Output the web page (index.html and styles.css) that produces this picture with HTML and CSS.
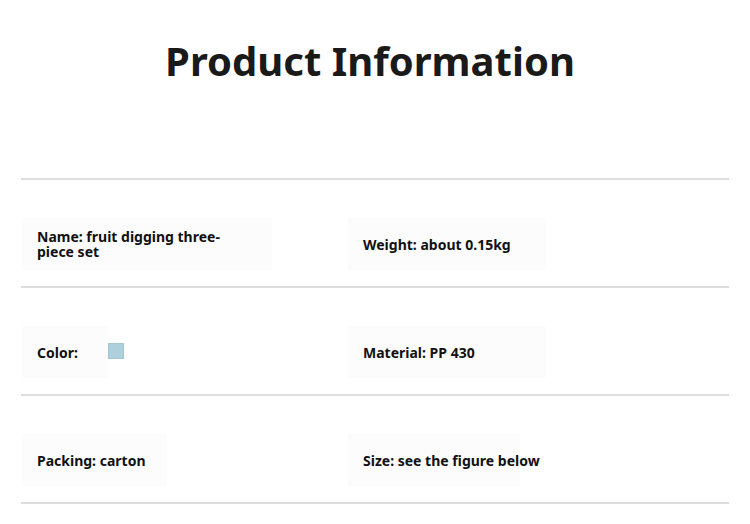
FILE: index.html
```html
<!DOCTYPE html>
<html lang="en">
<head>
	<meta charset="UTF-8" />
	<meta name="viewport" content="width=device-width, initial-scale=1.0" />
	<title>Product Information</title>
	<link rel="stylesheet" href="styles.css">
</head>
<body>

	<div class="page">
		<h1 class="page__title">Product Information</h1>

		<div class="specs">
			<div class="specs__row">
				<div class="specs__cell specs__cell--name">Name: fruit digging three-piece set</div>
				<div class="specs__cell specs__cell--weight">Weight: about 0.15kg</div>
			</div>
			<div class="specs__row">
				<div class="specs__cell specs__cell--color">
					Color:
					<span class="specs__swatch"></span>
				</div>
				<div class="specs__cell specs__cell--material">Material: PP 430</div>
			</div>
			<div class="specs__row">
				<div class="specs__cell specs__cell--packing">Packing: carton</div>
				<div class="specs__cell specs__cell--size">Size: see the figure below</div>
			</div>
		</div>
	</div>

</body>
</html>
```

FILE: styles.css
```css
* {
	box-sizing: border-box;
}

html {
	margin: 0px;
	padding: 0px;
}

body {
	margin: 0px;
	padding: 0px;
	background-color: #ffffff;
	font-family: "Noto Sans", "Open Sans", sans-serif;
	color: #111111;
}

.page {
	padding: 0px 21px;
}

.page__title {
	margin: 0px;
	padding-top: 35px;
	padding-right: 10px;
	height: 178px;
	text-align: center;
	font-size: 40px;
	font-weight: bold;
	line-height: 52px;
	color: #1a1a1a;
}

.specs {
	border-top: 2px solid #dddddd;
}

.specs__row {
	display: grid;
	grid-template-columns: 326px 1fr;
	align-items: end;
	height: 108px;
	padding-bottom: 16px;
	border-bottom: 2px solid #dddddd;
}

.specs__cell {
	display: flex;
	align-items: center;
	height: 52px;
	margin-left: 1px;
	padding: 0px 15px;
	background-color: #fcfcfc;
	font-size: 14px;
	font-weight: bold;
	line-height: 15px;
	white-space: nowrap;
}

.specs__cell--name {
	width: 250px;
	padding-right: 30px;
	white-space: normal;
}

.specs__cell--weight {
	width: 198px;
}

.specs__cell--color {
	width: 86px;
}

.specs__cell--material {
	width: 198px;
}

.specs__cell--packing {
	width: 145px;
}

.specs__cell--size {
	width: 172px;
}

.specs__swatch {
	display: inline-block;
	width: 16px;
	height: 16px;
	margin-left: 30px;
	margin-top: -2px;
	background-color: #aecfdc;
	border: 1px solid #a4c6d3;
	flex-shrink: 0;
}
```
